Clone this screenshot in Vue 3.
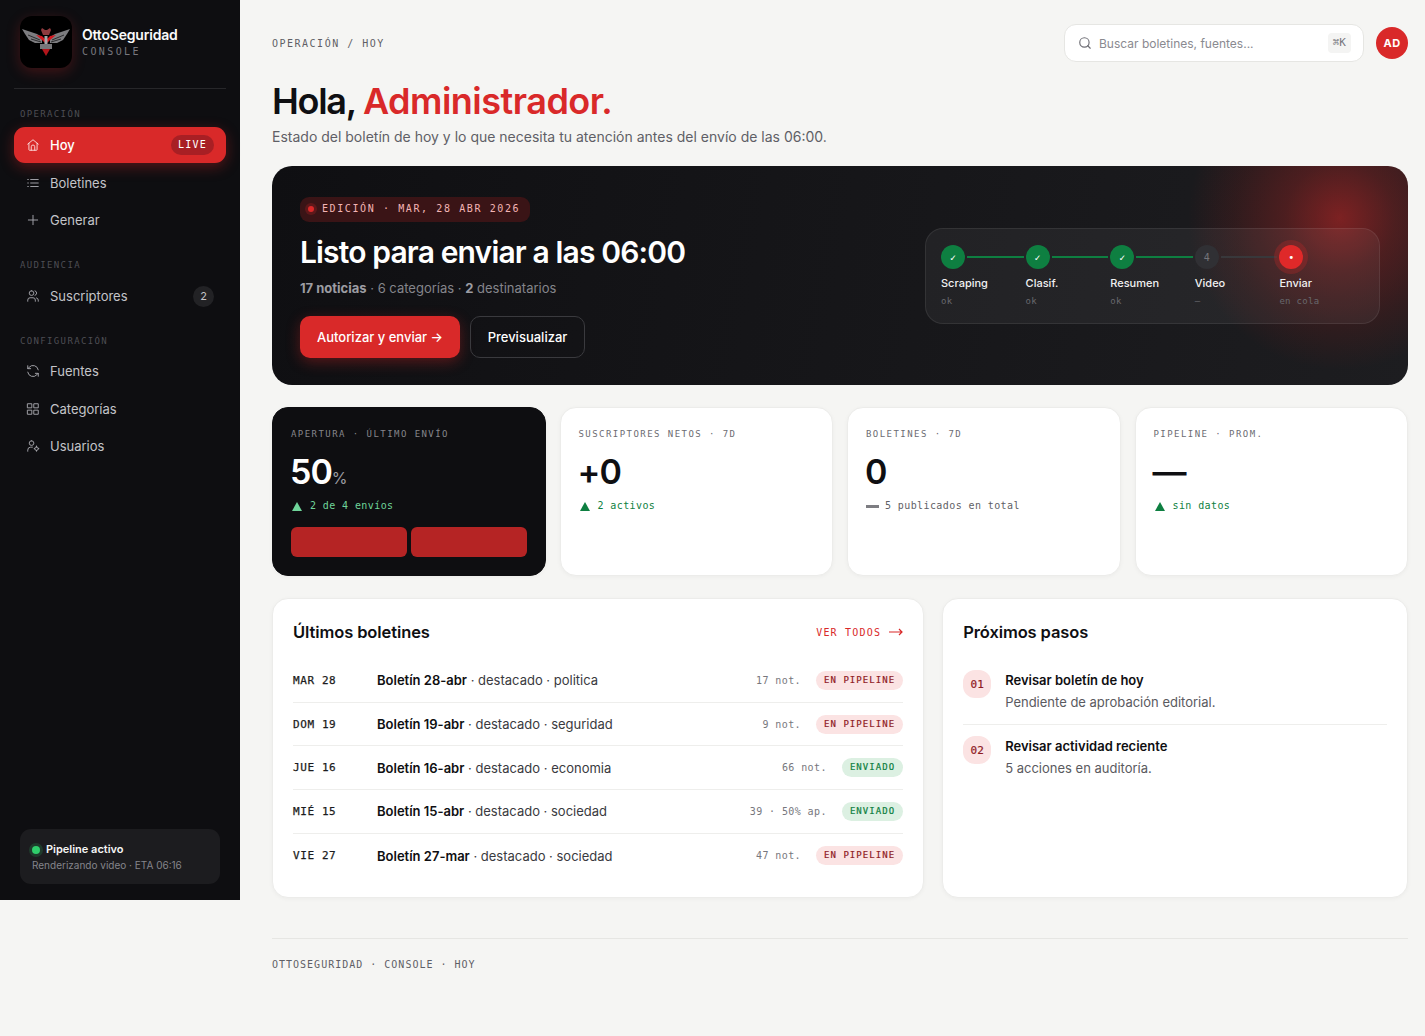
<script setup>
const groups = [
  { label: 'OPERACIÓN', items: [
    { name: 'Hoy', icon: 'home', active: true, live: true },
    { name: 'Boletines', icon: 'list' },
    { name: 'Generar', icon: 'plus' },
  ]},
  { label: 'AUDIENCIA', items: [{ name: 'Suscriptores', icon: 'users', count: 2 }]},
  { label: 'CONFIGURACIÓN', items: [
    { name: 'Fuentes', icon: 'sync' },
    { name: 'Categorías', icon: 'grid' },
    { name: 'Usuarios', icon: 'usercog' },
  ]},
]
const icons = {
  home: ['M3 10.5 12 3l9 7.5', 'M5 9v11a1 1 0 0 0 1 1h12a1 1 0 0 0 1-1V9', 'M9 21v-6a3 3 0 0 1 6 0v6'],
  list: ['M8 6h13', 'M8 12h13', 'M8 18h13', 'M3 6h1', 'M3 12h1', 'M3 18h1'],
  plus: ['M12 4v16', 'M4 12h16'],
  users: ['M16 21v-2a4 4 0 0 0-4-4H7a4 4 0 0 0-4 4v2', 'M9.5 3a4 4 0 1 1 0 8 4 4 0 0 1 0-8', 'M21 21v-2a4 4 0 0 0-3-3.8', 'M15.5 3.2a4 4 0 0 1 0 7.6'],
  sync: ['M21 10A9 9 0 0 0 5.5 5.5L3 8', 'M3 3v5h5', 'M3 14a9 9 0 0 0 15.5 4.5L21 16', 'M21 21v-5h-5'],
  grid: ['M3 3h7v7H3z', 'M14 3h7v7h-7z', 'M3 14h7v7H3z', 'M14 14h7v7h-7z'],
  usercog: ['M9.5 3a4 4 0 1 1 0 8 4 4 0 0 1 0-8', 'M3 21v-2a5 5 0 0 1 5-5h3', 'M18 13.5a3 3 0 1 1 0 6 3 3 0 0 1 0-6', 'M18 12v1.5', 'M18 19.5V21', 'M14 16.5h1', 'M21 16.5h1'],
}
const steps = [
  { name: 'Scraping', sub: 'ok', mark: '✓', state: 'done' },
  { name: 'Clasif.', sub: 'ok', mark: '✓', state: 'done' },
  { name: 'Resumen', sub: 'ok', mark: '✓', state: 'done' },
  { name: 'Video', sub: '—', mark: '4', state: 'idle' },
  { name: 'Enviar', sub: 'en cola', mark: '•', state: 'now' },
]
const stats = [
  { label: 'SUSCRIPTORES NETOS · 7D', value: '+0', delta: '2 activos', trend: 'up' },
  { label: 'BOLETINES · 7D', value: '0', delta: '5 publicados en total', trend: 'flat' },
  { label: 'PIPELINE · PROM.', value: '—', delta: 'sin datos', trend: 'up' },
]
const rows = [
  { date: 'MAR 28', name: 'Boletín 28-abr', tail: 'destacado · politica', meta: '17 not.', status: 'EN PIPELINE', sent: false },
  { date: 'DOM 19', name: 'Boletín 19-abr', tail: 'destacado · seguridad', meta: '9 not.', status: 'EN PIPELINE', sent: false },
  { date: 'JUE 16', name: 'Boletín 16-abr', tail: 'destacado · economia', meta: '66 not.', status: 'ENVIADO', sent: true },
  { date: 'MIÉ 15', name: 'Boletín 15-abr', tail: 'destacado · sociedad', meta: '39 · 50% ap.', status: 'ENVIADO', sent: true },
  { date: 'VIE 27', name: 'Boletín 27-mar', tail: 'destacado · sociedad', meta: '47 not.', status: 'EN PIPELINE', sent: false },
]
const nextSteps = [
  { n: '01', title: 'Revisar boletín de hoy', sub: 'Pendiente de aprobación editorial.' },
  { n: '02', title: 'Revisar actividad reciente', sub: '5 acciones en auditoría.' },
]
</script>

<template>
  <div class="app">
    <aside class="side">
      <div class="brand">
        <div class="logo">
          <svg viewBox="0 0 52 52" width="52" height="52">
            <path d="M2 13 L17 18 L22 21 L22 27 L15 27 L9 24 L5 18Z" fill="#7d7d80"/>
            <path d="M50 13 L35 18 L30 21 L30 27 L37 27 L43 24 L47 18Z" fill="#7d7d80"/>
            <path d="M8 19 L20 24 M11 23 L21 26 M44 19 L32 24 M41 23 L31 26" stroke="#2b2b2d" stroke-width="1"/>
            <path d="M21 14 L22 12 L25 14 L27 14 L30 12 L31 14 L29 19 L23 19Z" fill="#8f3a3e"/>
            <path d="M16 19 L22 20 L25 23 L25 27 L22 24Z M36 19 L30 20 L27 23 L27 27 L30 24Z" fill="#d3171e"/>
            <path d="M24.5 20h3v9h-3z" fill="#a8a8aa"/>
            <path d="M20 28h12v5H20z" fill="#77777a"/>
            <path d="M22 33h8l-4 7z" fill="#b3151b"/>
          </svg>
        </div>
        <div class="brand-text">
          <div class="brand-name">OttoSeguridad</div>
          <div class="brand-sub">CONSOLE</div>
        </div>
      </div>

      <nav class="nav">
        <section v-for="g in groups" :key="g.label" class="group">
          <div class="group-label">{{ g.label }}</div>
          <a v-for="it in g.items" :key="it.name" class="item" :class="{ active: it.active }">
            <svg class="ico" viewBox="0 0 24 24" width="14" height="14" fill="none" stroke="currentColor" stroke-width="1.6" stroke-linecap="round" stroke-linejoin="round">
              <path v-for="d in icons[it.icon]" :key="d" :d="d" />
            </svg>
            <span class="item-name">{{ it.name }}</span>
            <span v-if="it.live" class="live">LIVE</span>
            <span v-if="it.count" class="count">{{ it.count }}</span>
          </a>
        </section>
      </nav>

      <div class="status">
        <div class="status-top"><i class="green-dot"></i>Pipeline activo</div>
        <div class="status-sub">Renderizando video · ETA 06:16</div>
      </div>
    </aside>

    <main class="main">
      <header class="top">
        <div class="crumb">OPERACIÓN / HOY</div>
        <div class="top-right">
          <div class="search">
            <svg viewBox="0 0 24 24" width="14" height="14" fill="none" stroke="#6f6f76" stroke-width="2" stroke-linecap="round"><circle cx="11" cy="11" r="8"/><path d="m21 21-4.3-4.3"/></svg>
            <span class="search-text">Buscar boletines, fuentes...</span>
            <kbd class="kbd">⌘K</kbd>
          </div>
          <div class="avatar">AD</div>
        </div>
      </header>

      <h1 class="hello">Hola, <em>Administrador.</em></h1>
      <p class="lead">Estado del boletín de hoy y lo que necesita tu atención antes del envío de las 06:00.</p>

      <section class="hero">
        <div class="hero-left">
          <div class="edition"><i class="red-dot"></i>EDICIÓN · MAR, 28 ABR 2026</div>
          <h2 class="hero-title">Listo para enviar a las 06:00</h2>
          <p class="hero-sub"><b>17 noticias</b> · 6 categorías · <b>2</b> destinatarios</p>
          <div class="actions">
            <button class="btn primary">Autorizar y enviar →</button>
            <button class="btn ghost">Previsualizar</button>
          </div>
        </div>
        <div class="pipeline">
          <div v-for="(s, i) in steps" :key="s.name" class="step">
            <div class="step-track">
              <span class="circle" :class="s.state">{{ s.mark }}</span>
              <span v-if="i < steps.length - 1" class="line" :class="{ on: s.state === 'done' }"></span>
            </div>
            <div class="step-name">{{ s.name }}</div>
            <div class="step-sub">{{ s.sub }}</div>
          </div>
        </div>
      </section>

      <section class="stats">
        <article class="stat dark">
          <div class="stat-label">APERTURA · ÚLTIMO ENVÍO</div>
          <div class="stat-value">50<small>%</small></div>
          <div class="stat-delta"><i class="tri"></i>2 de 4 envíos</div>
          <div class="bars"><span></span><span></span></div>
        </article>
        <article v-for="s in stats" :key="s.label" class="stat">
          <div class="stat-label">{{ s.label }}</div>
          <div class="stat-value">{{ s.value }}</div>
          <div class="stat-delta" :class="s.trend">
            <i :class="s.trend === 'up' ? 'tri' : 'dash'"></i>{{ s.delta }}
          </div>
        </article>
      </section>

      <section class="lower">
        <article class="card">
          <div class="card-head">
            <h3>Últimos boletines</h3>
            <a class="see-all">VER TODOS
              <svg viewBox="0 0 14 8" width="14" height="8" fill="none" stroke="currentColor" stroke-width="1.2"><path d="M0 4h13M10 1l3 3-3 3"/></svg>
            </a>
          </div>
          <div v-for="r in rows" :key="r.date" class="row">
            <span class="row-date">{{ r.date }}</span>
            <span class="row-name"><b>{{ r.name }}</b> · {{ r.tail }}</span>
            <span class="row-meta">{{ r.meta }}</span>
            <span class="pill" :class="{ sent: r.sent }">{{ r.status }}</span>
          </div>
        </article>
        <article class="card">
          <div class="card-head"><h3>Próximos pasos</h3></div>
          <div class="todos">
            <div v-for="n in nextSteps" :key="n.n" class="todo">
              <span class="todo-n">{{ n.n }}</span>
              <div>
                <div class="todo-title">{{ n.title }}</div>
                <div class="todo-sub">{{ n.sub }}</div>
              </div>
            </div>
          </div>
        </article>
      </section>

      <footer class="foot">OTTOSEGURIDAD · CONSOLE · HOY</footer>
    </main>
  </div>
</template>

<style>
html, body { margin: 0; background: #f5f5f3; }
</style>

<style scoped>
* { box-sizing: border-box; }
.app { display: flex; align-items: flex-start; min-height: 1036px; font-family: Inter, "Liberation Sans", sans-serif; color: #0f0f12; background: #f5f5f3; }

.side { width: 240px; height: 900px; flex: none; background: #0e0e11; padding: 16px 14px 16px; display: flex; flex-direction: column; }
.brand { display: flex; align-items: center; gap: 10px; padding: 0 6px 20px; border-bottom: 1px solid #27272a; height: 73px; }
.logo { width: 52px; height: 52px; border-radius: 12px; background: #000; box-shadow: 0 4px 14px rgba(220, 38, 38, .25); overflow: hidden; }
.logo svg { display: block; }
.brand-name { font-size: 14px; font-weight: 600; color: #fafafa; letter-spacing: -.2px; line-height: 17px; }
.brand-sub { font: 10px/14px "DejaVu Sans Mono", monospace; letter-spacing: 2.4px; color: #77777e; margin-top: 2px; }
.nav { flex: 1; }
.group-label { font: 9px/10px "DejaVu Sans Mono", monospace; letter-spacing: 1.35px; color: #4d4d53; padding: 0 6px; }
.group:nth-child(1) { margin-top: 20px; }
.group:nth-child(1) .group-label { margin-bottom: 8px; }
.group:nth-child(2) { margin-top: 22px; }
.group:nth-child(2) .group-label { margin-bottom: 8px; }
.group:nth-child(3) { margin-top: 22px; }
.group:nth-child(3) .group-label { margin-bottom: 7px; }
.item { display: flex; align-items: center; height: 36px; margin-bottom: 1.5px; padding: 0 12px; border-radius: 11px; color: #c4c4c8; font-size: 13px; gap: 10px; }
.ico { flex: none; color: #a8a8ae; }
.item-name { flex: 1; }
.item.active { background: #d92929; color: #fff; box-shadow: 0 4px 14px rgba(220, 38, 38, .35); font-weight: 500; }
.item.active .ico { color: #fbdada; }
.live { font: 10px/20px "DejaVu Sans Mono", monospace; letter-spacing: 1.2px; background: #a81f24; border-radius: 10px; padding: 0 7px; color: #fff; }
.count { width: 21px; height: 21px; border-radius: 50%; background: #222225; color: #c4c4c8; font-size: 11px; display: grid; place-items: center; }
.status { margin: 0 6px; height: 55px; border-radius: 11px; background: #1c1c1f; padding: 13px 12px; }
.status-top { display: flex; align-items: center; font-size: 11px; font-weight: 600; line-height: 15px; color: #f5f5f5; gap: 5px; margin-left: -1px; }
.green-dot { width: 8px; height: 8px; margin: 0 1px; border-radius: 50%; background: #2fce6b; box-shadow: 0 0 0 3px rgba(47, 206, 107, .18); }
.status-sub { font-size: 10px; line-height: 15px; color: #85858b; margin-top: 1px; }

.main { flex: 1; min-width: 0; padding: 24px 17px 0 32px; }
.top { display: flex; justify-content: space-between; align-items: center; height: 38px; }
.crumb { font: 10px/14px "DejaVu Sans Mono", monospace; letter-spacing: 1.5px; color: #5f5f66; padding-top: 2px; }
.top-right { display: flex; align-items: center; gap: 12px; }
.search { width: 300px; height: 38px; border: 1px solid #e6e6e3; border-radius: 12px; background: #fff; display: flex; align-items: center; padding: 0 12px 0 13px; gap: 7px; }
.search-text { flex: 1; font-size: 12px; color: #8a8a90; }
.kbd { font: 11px/20px "DejaVu Sans Mono", monospace; color: #77777d; background: #f4f4f3; border-radius: 4px; padding: 0 5px; }
.avatar { width: 32px; height: 32px; border-radius: 50%; background: #d92929; color: #fff; font-size: 11px; font-weight: 700; letter-spacing: .5px; display: grid; place-items: center; }
.hello { margin: 17px 0 0; font-size: 36px; line-height: 44px; font-weight: 600; letter-spacing: -1.3px; color: #0f0f12; }
.hello em { font-style: normal; color: #d92929; letter-spacing: -.5px; }
.lead { margin: 4px 0 0; font-size: 14px; line-height: 20px; color: #5f5f66; }

.hero { margin-top: 19px; height: 219px; border-radius: 20px; padding: 30px 28px; display: flex; justify-content: space-between; align-items: center; color: #fff;
  background: radial-gradient(circle at 1068px 52px, rgba(170, 36, 36, .68) 0, rgba(125, 32, 32, .5) 55px, rgba(90, 28, 28, .34) 105px, rgba(20, 20, 22, 0) 152px), linear-gradient(100deg, #0f0f12 0%, #1d1d20 100%); }
.hero-left { align-self: flex-start; }
.edition { display: inline-flex; align-items: center; height: 25px; border-radius: 9px; background: #3a1416; padding: 0 10px 2px 6px; font: 10px/21px "DejaVu Sans Mono", monospace; letter-spacing: 1.6px; color: #f3b4b4; gap: 7px; }
.red-dot { width: 6px; height: 6px; margin: 2px 1px 0 2px; border-radius: 50%; background: #d92929; box-shadow: 0 0 0 3px rgba(217, 41, 41, .22); }
.hero-title { margin: 11px 0 0; font-size: 30px; line-height: 38px; font-weight: 600; letter-spacing: -.85px; }
.hero-sub { margin: 7px 0 0; font-size: 13px; line-height: 20px; color: #85858b; }
.hero-sub b { font-weight: 700; color: #9c9ca2; }
.actions { display: flex; gap: 10px; margin-top: 18px; }
.btn { height: 42px; border-radius: 10px; font: 500 13px Inter, sans-serif; color: #fff; }
.primary { width: 160px; background: #d92929; border: 0; box-shadow: 0 4px 14px rgba(220, 38, 38, .35); }
.ghost { width: 115px; background: transparent; border: 1px solid #3a3a3e; }
.pipeline { width: 455px; height: 96px; flex: none; margin-top: 1px; border-radius: 18px; border: 1px solid rgba(255, 255, 255, .08); background: rgba(255, 255, 255, .05); padding: 16px 15px; display: flex; }
.step { flex: 1; min-width: 0; }
.step-track { display: flex; align-items: center; gap: 2px; height: 24px; padding-right: 2px; }
.circle { width: 24px; height: 24px; flex: none; border-radius: 50%; display: grid; place-items: center; font: 10px "DejaVu Sans Mono", monospace; color: #fff; }
.circle.done { background: #0e7f41; }
.circle.idle { background: #303034; color: #75757b; }
.circle.now { background: #df2929; box-shadow: 0 0 0 5px rgba(217, 41, 41, .25); }
.line { flex: 1; height: 2px; background: #38383b; }
.line.on { background: #0e7f41; }
.step-name { margin-top: 7px; font-size: 11px; line-height: 14px; font-weight: 500; color: #f1f1f1; }
.step-sub { margin-top: 5px; font: 9px/12px "DejaVu Sans Mono", monospace; letter-spacing: .3px; color: #68686d; }

.stats { margin-top: 22px; display: grid; grid-template-columns: repeat(4, 1fr); gap: 14px; }
.stat { height: 169px; border-radius: 16px; background: #fff; border: 1px solid #ececea; box-shadow: 0 1px 4px rgba(0, 0, 0, .04); padding: 20px 18px; }
.stat.dark { background: #0e0e11; border-color: #0e0e11; color: #fff; }
.stat-label { font: 9px/12px "DejaVu Sans Mono", monospace; letter-spacing: 1.45px; color: #6c6c72; }
.dark .stat-label { color: #85858b; }
.stat-value { margin-top: 8px; font-size: 34px; line-height: 48px; height: 48px; font-weight: 600; letter-spacing: -1px; margin-left: -1px; }
.stat-value small { font-size: 16px; line-height: 1; font-weight: 400; color: #9c9ca2; letter-spacing: 0; }
.stat-delta { display: flex; align-items: center; gap: 8px; margin-top: 3px; font: 10px/14px "DejaVu Sans Mono", monospace; color: #0e7f41; letter-spacing: .4px; }
.dark .stat-delta { color: #6fd59a; }
.stat-delta.flat { color: #5f5f66; gap: 6px; }
.tri { width: 0; height: 0; margin-left: 1px; border-left: 5px solid transparent; border-right: 5px solid transparent; border-bottom: 9px solid currentColor; }
.dash { width: 13px; height: 3px; background: #7d7d82; }
.bars { display: flex; gap: 4px; margin-top: 14px; }
.bars span { flex: 1; height: 30px; border-radius: 6px; background: #b52424; }

.lower { margin-top: 22px; display: grid; grid-template-columns: 1.4fr 1fr; gap: 18px; }
.card { height: 300px; background: #fff; border: 1px solid #ececea; border-radius: 16px; box-shadow: 0 1px 4px rgba(0, 0, 0, .04); padding: 20px 20px; }
.card-head { display: flex; justify-content: space-between; align-items: center; height: 26px; margin-bottom: 14px; }
.card-head h3 { margin: 0; font-size: 16.5px; font-weight: 600; letter-spacing: -.1px; }
.todos { padding-top: 11px; }
.see-all { display: flex; align-items: center; gap: 8px; font: 10px "DejaVu Sans Mono", monospace; letter-spacing: 1.2px; color: #d92929; }
.row { display: flex; align-items: center; height: 43.7px; border-bottom: 1px solid #eeeeec; font-size: 13px; }
.row:last-child { border-bottom: 0; }
.row-date { width: 84px; flex: none; font: 11px "DejaVu Sans Mono", monospace; letter-spacing: .6px; color: #1c1c20; -webkit-text-stroke: .25px #1c1c20; }
.row-name { flex: 1; color: #3a3a40; }
.row-name b { font-weight: 600; color: #0f0f12; }
.row-meta { font: 10px "DejaVu Sans Mono", monospace; letter-spacing: .4px; color: #77777d; margin-right: 15px; }
.pill { height: 19px; border-radius: 10px; background: #fbe3e3; color: #8f1a1f; font: 9px/19px "DejaVu Sans Mono", monospace; letter-spacing: 1.05px; padding: 0 8px; -webkit-text-stroke: .2px currentColor; }
.pill.sent { background: #dcf0e2; color: #0e7f41; }
.todo { display: flex; gap: 14px; padding-bottom: 12px; margin-bottom: 11px; border-bottom: 1px solid #eeeeec; }
.todo:last-child { border-bottom: 0; }
.todo-n { width: 28px; height: 28px; border-radius: 12px; background: #fbe3e3; color: #8f1a1f; font: 11px/30px "DejaVu Sans Mono", monospace; text-align: center; flex: none; -webkit-text-stroke: .2px currentColor; }
.todo-title { font-size: 13px; font-weight: 600; line-height: 20px; }
.todo-sub { font-size: 13px; line-height: 20px; color: #5a5a60; margin-top: 2px; }

.foot { margin-top: 40px; border-top: 1px solid #e6e6e3; padding-top: 19px; font: 10px/14px "DejaVu Sans Mono", monospace; letter-spacing: 1px; color: #5f5f66; }
</style>
